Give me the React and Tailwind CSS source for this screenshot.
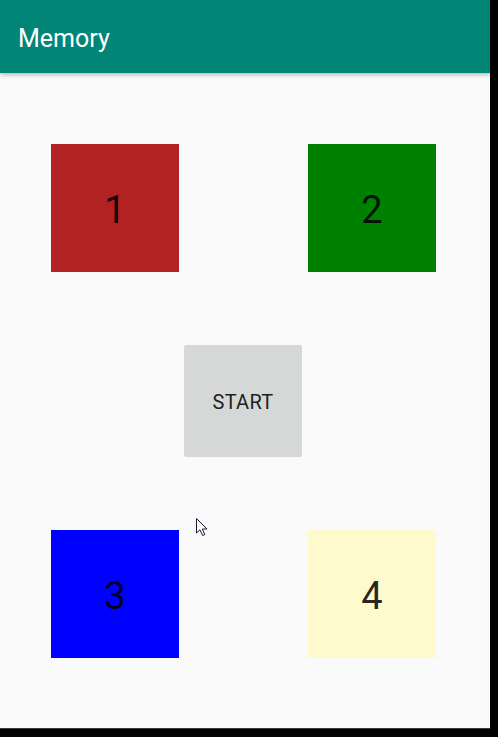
import React from "react";

function Tile({ color, n }) {
  return (
    <div className={`w-[128px] h-[128px] flex items-center justify-center ${color}`}>
      <span className="text-[38px] leading-none text-black/85 pt-[3px]" style={{ fontFamily: "Roboto, sans-serif" }}>{n}</span>
    </div>
  );
}

export default function App() {
  return (
    <div className="relative w-[498px] h-[737px] bg-black overflow-hidden" style={{ fontFamily: "Roboto, 'Liberation Sans', sans-serif" }}>
      <div className="w-[490px] h-[729px] bg-[#fafafa] flex flex-col border-b border-[#3a3a3a]">
        <div className="h-[73px] shrink-0 bg-[#008577] flex items-center pl-[18px] shadow-[0_2px_4px_rgba(0,0,0,0.25)] relative z-10">
          <span className="text-white text-[25px] leading-none pt-[3px]">Memory</span>
        </div>
        <div className="flex flex-col pt-[71px]">
          <div className="flex justify-between pl-[51px] pr-[54px]">
            <Tile color="bg-[#b22222]" n="1" />
            <Tile color="bg-[#008000]" n="2" />
          </div>
          <div className="mt-[73px] ml-[184px] w-[118px] h-[112px] rounded-[2px] bg-[#d6d7d7] flex items-center justify-center">
            <span className="text-[20px] leading-none text-[#1f1f1f] tracking-[0.3px] pt-[2px]">START</span>
          </div>
          <div className="mt-[73px] flex justify-between pl-[51px] pr-[54px]">
            <Tile color="bg-[#0000ff]" n="3" />
            <Tile color="bg-[#fffacd]" n="4" />
          </div>
        </div>
      </div>
      <svg className="absolute left-[196px] top-[518px]" width="13" height="20" viewBox="0 0 13 20">
        <path d="M0.5 0.5 L0.5 15 L4 11.8 L6.6 17.5 L8.8 16.5 L6.3 11 L11 11 Z" fill="#ffffff" stroke="#1a1a2a" strokeWidth="1" strokeLinejoin="round" />
      </svg>
    </div>
  );
}
